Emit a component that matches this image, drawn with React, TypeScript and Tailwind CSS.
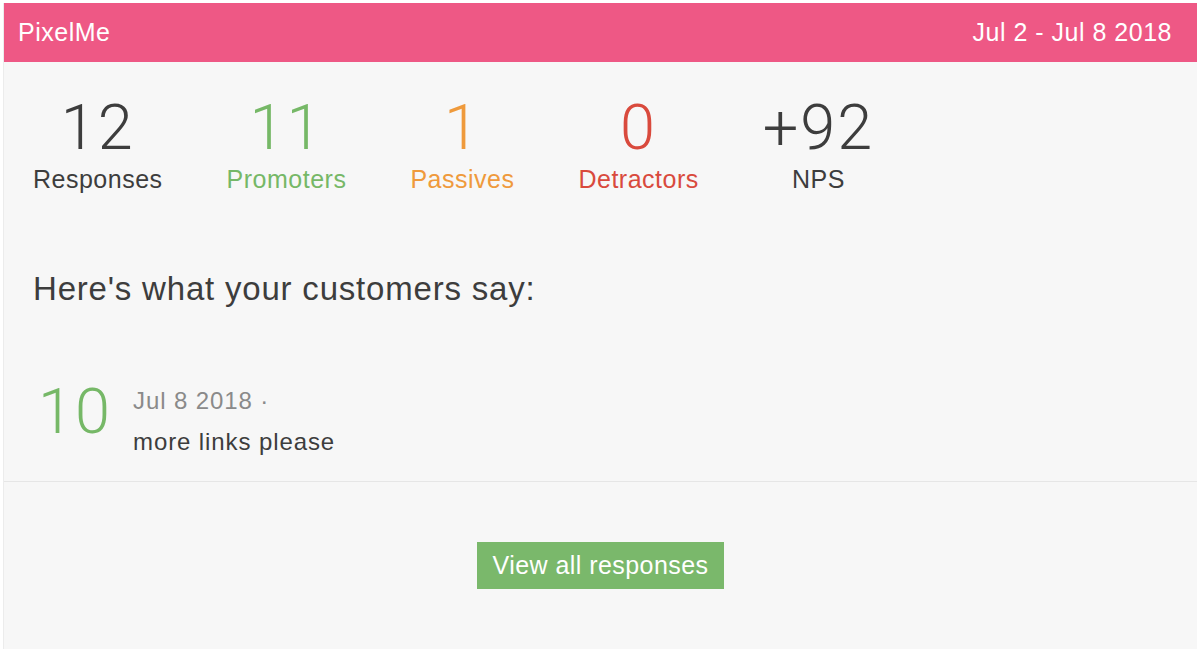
const stats = [
  { value: "12", label: "Responses", color: "text-[#3d3d3d]" },
  { value: "11", label: "Promoters", color: "text-[#76b867]" },
  { value: "1", label: "Passives", color: "text-[#ef9a3c]" },
  { value: "0", label: "Detractors", color: "text-[#d94a3d]" },
  { value: "+92", label: "NPS", color: "text-[#3d3d3d]" },
];

export default function App() {
  return (
    <div className="min-h-screen bg-white pl-[3px] pr-[3px] pt-[3px] font-['Liberation_Sans',Arial,sans-serif]">
      <div className="min-h-[646px] bg-[#f7f7f7] border-l border-[#ececec]">
        <header className="h-[59px] bg-[#ee5885] flex items-center justify-between pl-[14px] pr-[25px] text-white text-[25px] tracking-[0.5px]">
          <span>PixelMe</span>
          <span>Jul 2 - Jul 8 2018</span>
        </header>

        <div className="flex gap-[64px] pl-[29px] pt-[35px]">
          {stats.map((s) => (
            <div key={s.label} className={`flex flex-col items-center ${s.color}`}>
              <div className="font-['Roboto',sans-serif] font-light text-[63px] leading-[62px] tracking-[2px]">
                {s.value}
              </div>
              <div className="mt-[5px] text-[25px] leading-[30px] tracking-[0.5px]">{s.label}</div>
            </div>
          ))}
        </div>

        <h2 className="pl-[29px] mt-[75px] text-[33px] leading-[40px] tracking-[0.8px] text-[#3d3d3d]">
          Here's what your customers say:
        </h2>

        <div className="flex items-start pl-[34px] pt-[72px] pb-[24px] border-b border-[#e6e6e6]">
          <div className="font-['Roboto',sans-serif] font-light text-[63px] leading-[62px] tracking-[2px] text-[#76b867] w-[95px]">
            10
          </div>
          <div className="pt-[5px] tracking-[0.9px]">
            <div className="text-[24px] leading-[30px] text-[#8a8a8a]">Jul 8 2018 ·</div>
            <div className="mt-[11px] text-[24px] leading-[30px] text-[#3d3d3d]">more links please</div>
          </div>
        </div>

        <div className="flex justify-center pt-[60px]">
          <button className="h-[47px] px-[15px] bg-[#7ab86b] text-white text-[25px] tracking-[0.45px]">
            View all responses
          </button>
        </div>
      </div>
    </div>
  );
}
